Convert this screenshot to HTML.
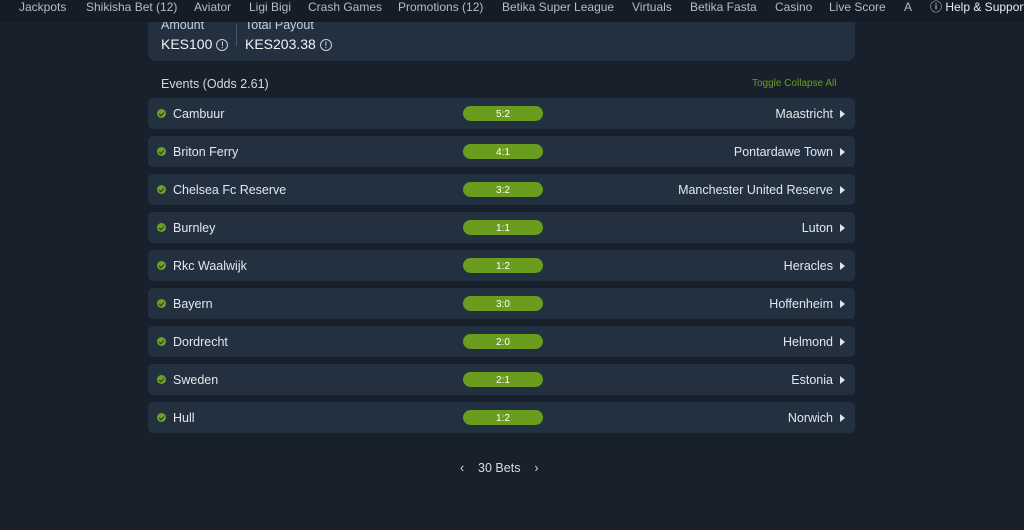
<!DOCTYPE html>
<html><head><style>
*{margin:0;padding:0;box-sizing:border-box}
body{width:1024px;height:530px;background:#18202b;font-family:"Liberation Sans",sans-serif;color:#e3e7ec;position:relative;overflow:hidden}
.nav{position:absolute;left:0;top:0;width:1024px;height:22px;background:#151c26;font-size:12px;color:#b4bcc6;white-space:nowrap;z-index:5}
.nav span{position:absolute;top:0;line-height:14px}
.card{position:absolute;left:148px;top:0;width:707px;height:61px;background:#233040;border-radius:0 0 8px 8px}
.lbl{position:absolute;font-size:12.5px;color:#c9d0d8}
.val{position:absolute;font-size:14px;color:#f0f3f6}
.info{display:inline-block;width:12px;height:12px;border:1.3px solid #c9d0d8;border-radius:50%;font-size:9px;text-align:center;line-height:10px;vertical-align:1px;margin-left:4px}
.row{position:absolute;left:148px;width:707px;height:31px;background:#233040;border-radius:5px}
.chk{position:absolute;left:9px;top:11px;width:9px;height:9px;border-radius:50%;background:#6fa022}
.chk:after{content:"";position:absolute;left:2.5px;top:1.5px;width:2px;height:4px;border:solid #233040;border-width:0 1.3px 1.3px 0;transform:rotate(45deg)}
.h{position:absolute;left:25px;top:9px;font-size:12.5px}
.a{position:absolute;right:22px;top:9px;font-size:12.5px}
.tri{position:absolute;right:10px;top:12px;width:0;height:0;border-left:5px solid #e3e7ec;border-top:4px solid transparent;border-bottom:4px solid transparent}
.pill{position:absolute;left:315px;top:8px;width:80px;height:15px;border-radius:8px;background:#6a9c1e;color:#fff;font-size:10px;text-align:center;line-height:17px}
</style></head><body>
<div class="nav">
<span style="left:19px">Jackpots</span><span style="left:86px">Shikisha Bet (12)</span><span style="left:194px">Aviator</span><span style="left:249px">Ligi Bigi</span><span style="left:308px">Crash Games</span><span style="left:398px">Promotions (12)</span><span style="left:502px">Betika Super League</span><span style="left:632px">Virtuals</span><span style="left:690px">Betika Fasta</span><span style="left:775px">Casino</span><span style="left:829px">Live Score</span><span style="left:904px">A</span><span style="left:930px;color:#e8ecf0">ⓘ Help &amp; Support</span>
</div>
<div class="card">
<div class="lbl" style="left:13px;top:18px">Amount</div>
<div class="val" style="left:13px;top:36px">KES100<span class="info">!</span></div>
<div style="position:absolute;left:88px;top:24px;width:1px;height:22px;background:#4a5665"></div>
<div class="lbl" style="left:97px;top:18px">Total Payout</div>
<div class="val" style="left:97px;top:36px">KES203.38<span class="info">!</span></div>
</div>
<div style="position:absolute;left:161px;top:77px;font-size:12.5px;color:#d5dae0">Events (Odds 2.61)</div>
<div style="position:absolute;left:752px;top:78px;font-size:10px;color:#6a9c1e">Toggle Collapse All</div>

<div class="row" style="top:98px"><i class="chk"></i><span class="h">Cambuur</span><span class="pill">5:2</span><span class="a">Maastricht</span><i class="tri"></i></div>
<div class="row" style="top:136px"><i class="chk"></i><span class="h">Briton Ferry</span><span class="pill">4:1</span><span class="a">Pontardawe Town</span><i class="tri"></i></div>
<div class="row" style="top:174px"><i class="chk"></i><span class="h">Chelsea Fc Reserve</span><span class="pill">3:2</span><span class="a">Manchester United Reserve</span><i class="tri"></i></div>
<div class="row" style="top:212px"><i class="chk"></i><span class="h">Burnley</span><span class="pill">1:1</span><span class="a">Luton</span><i class="tri"></i></div>
<div class="row" style="top:250px"><i class="chk"></i><span class="h">Rkc Waalwijk</span><span class="pill">1:2</span><span class="a">Heracles</span><i class="tri"></i></div>
<div class="row" style="top:288px"><i class="chk"></i><span class="h">Bayern</span><span class="pill">3:0</span><span class="a">Hoffenheim</span><i class="tri"></i></div>
<div class="row" style="top:326px"><i class="chk"></i><span class="h">Dordrecht</span><span class="pill">2:0</span><span class="a">Helmond</span><i class="tri"></i></div>
<div class="row" style="top:364px"><i class="chk"></i><span class="h">Sweden</span><span class="pill">2:1</span><span class="a">Estonia</span><i class="tri"></i></div>
<div class="row" style="top:402px"><i class="chk"></i><span class="h">Hull</span><span class="pill">1:2</span><span class="a">Norwich</span><i class="tri"></i></div>

<div style="position:absolute;left:460px;top:461px;font-size:12.5px;color:#d5dae0;white-space:nowrap">‹&nbsp;&nbsp;&nbsp;&nbsp;30 Bets&nbsp;&nbsp;&nbsp;&nbsp;›</div>
</body></html>
